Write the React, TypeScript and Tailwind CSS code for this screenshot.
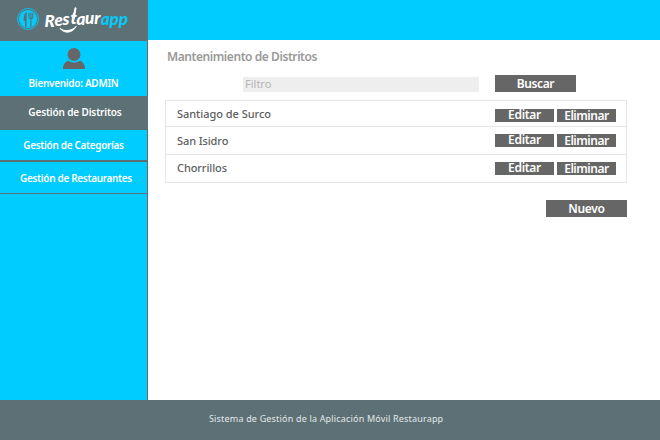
const rows = [
  { name: "Santiago de Surco", row: "h-[26px]", label: "pt-[6px] tracking-[-0.04px]", actions: "pt-[8px]" },
  { name: "San Isidro", row: "h-[28px]", label: "pt-[7px] tracking-[-0.1px]", actions: "pt-[7px]" },
  { name: "Chorrillos", row: "h-[28px]", label: "pt-[6px] tracking-[-0.1px]", actions: "pt-[7px]" },
];

function Logo() {
  return (
    <svg width="147" height="41" viewBox="0 0 147 41" className="block">
      <circle cx="28" cy="19" r="10.500" fill="none" stroke="#08c8f7" strokeWidth="0.9" />
      <circle cx="28" cy="19" r="9.100" fill="#08c8f7" />
      <path d="M26.600 12v14.500c0 .8-1.500.8-1.500 0V21h-1.300c-.4-4 .5-8 2.800-9z" fill="#5c7075" />
      <path d="M29 13v4c0 2.500 3.800 2.500 3.800 0v-4M30.900 13v13.500" fill="none" stroke="#5c7075" strokeWidth="1.100" strokeLinecap="round" />
      <g fontFamily="Lato, sans-serif" fontWeight="900" fontStyle="italic" fontSize="17">
        <text x="44.500 54.500 62.500" y="26.500 26 25.200" fill="#fff">Res</text>
        <text x="70.500" y="24.200" fontSize="17" fill="#fff">t</text>
        <text x="76.500 85 94.300" y="24.500 24 24" fill="#fff">aur</text>
        <text x="100.800 109.500 118.800" y="24.500 24.500 24.500" fill="#08c8f7">app</text>
      </g>
      <path d="M75.500 8.200L73.800 18" stroke="#fff" strokeWidth="2" strokeLinecap="round" />
      <path d="M60 28.300c4 3.600 11.500 3 16.300-2c-3.800 7.200-12.300 7.600-16.300 2z" fill="#fff" stroke="#fff" strokeWidth="1" strokeLinejoin="round" />
    </svg>
  );
}

function Button({ children, className }: { children: string; className: string }) {
  return (
    <button className={`flex shrink-0 justify-center whitespace-nowrap bg-[#666] text-[12px] font-semibold text-white ${className}`}>
      {children}
    </button>
  );
}

export default function App() {
  return (
    <div className="flex h-[440px] w-[660px] flex-col overflow-hidden bg-white font-['Noto_Sans',sans-serif] text-[11px] leading-[14px]">
      <div className="flex h-[400px]">
        <aside className="flex w-[148px] shrink-0 flex-col border-r border-[#5c7075] bg-[#0cf] font-semibold text-white">
          <div className="-mr-px h-[41px] bg-[#5c7075]"><Logo /></div>
          <div className="flex h-[55px] flex-col items-center">
            <svg width="24" height="23" viewBox="0 0 24 23" className="mt-[6px]">
              <circle cx="12" cy="7.500" r="6.500" fill="#666" />
              <path d="M1 22c0-4 1.500-7 5.200-8.300c3.400 2.400 8.200 2.400 11.600 0c3.700 1.300 5.200 4.300 5.200 8.300z" fill="#666" />
            </svg>
            <span className="mt-[6px] text-[10px] tracking-[-0.3px]">Bienvenido: ADMIN</span>
          </div>
          <nav className="text-center text-[10px]">
            <a className="block h-[34px] bg-[#5c7075] pt-[9px] pl-[3px] tracking-[-0.15px]">Gestión de Distritos</a>
            <a className="block h-[32px] border-b-2 border-[#5c7075] pt-[8px] tracking-[-0.33px]">Gestión de Categorías</a>
            <a className="block h-[32px] border-b border-[#5c7075] pt-[9px] pl-[5px] tracking-[-0.33px]">Gestión de Restaurantes</a>
          </nav>
        </aside>
        <main className="w-[512px]">
          <header className="h-[40px] bg-[#0cf]" />
          <div className="w-[479px] pl-[17px]">
            <h1 className="h-[35px] pl-[2px] pt-[10px] text-[12px] font-semibold tracking-[-0.43px] text-[#999]">Mantenimiento de Distritos</h1>
            <div className="flex h-[25px]">
              <div className="ml-[78px] mt-[2px] h-[15px] w-[236px] bg-[#eee] pl-[2px] text-[11px] text-[#b5b5b5]">Filtro</div>
              <Button className="ml-[16px] h-[17px] w-[81px] leading-[18px] tracking-[-0.4px]">Buscar</Button>
            </div>
            <div className="border border-b-0 border-[#e6e6e6]">
              {rows.map((r) => (
                <div key={r.name} className={`flex border-b border-[#e6e6e6] pl-[11px] ${r.row}`}>
                  <span className={`w-[318px] font-medium text-[#5e5e5e] ${r.label}`}>{r.name}</span>
                  <div className={`flex gap-[3px] ${r.actions}`}>
                    <Button className="h-[13px] w-[59px] leading-[12px] tracking-[-0.3px]">Editar</Button>
                    <Button className="h-[13px] w-[59px] leading-[14px] tracking-[-0.45px]">Eliminar</Button>
                  </div>
                </div>
              ))}
            </div>
            <Button className="ml-auto mt-[17px] h-[17px] w-[81px] leading-[18px] tracking-[-0.3px]">Nuevo</Button>
          </div>
        </main>
      </div>
      <footer className="h-[40px] bg-[#5c7075] pl-[209px] pt-[12px] text-[9px] tracking-[0.18px] text-[#e3e8e9]">
        Sistema de Gestión de la Aplicación Móvil Restaurapp
      </footer>
    </div>
  );
}
